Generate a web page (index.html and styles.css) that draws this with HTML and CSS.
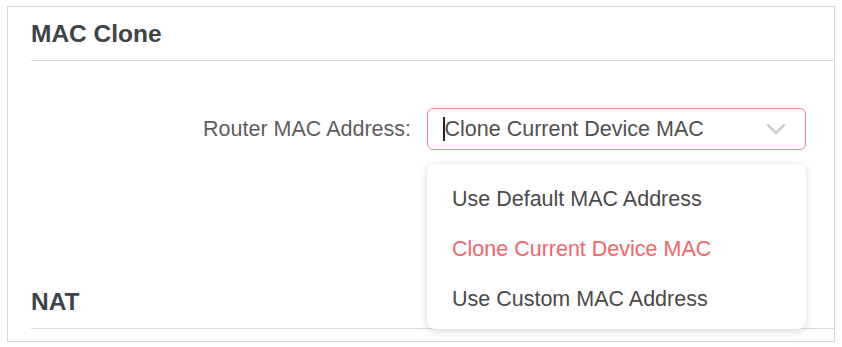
FILE: index.html
```html
<!DOCTYPE html>
<html lang="en">
<head>
  <meta charset="UTF-8" />
  <title>MAC Clone</title>
  <link rel="stylesheet" href="styles.css">
</head>
<body>
  <div class="panel">
    <!-- MAC Clone section -->
    <div class="section">
      <h2 class="section-title">MAC Clone</h2>
      <div class="form-row">
        <label class="form-label">Router MAC Address:</label>
        <div class="select-wrap">
          <div class="select-box">
            <span class="caret"></span>
            <span class="select-text">Clone Current Device MAC</span>
            <svg class="chevron" width="20" height="12" viewBox="0 0 20 12">
              <path d="M2 2 L10 10 L18 2" fill="none" stroke="#c8c8c8" stroke-width="2.2" stroke-linecap="round" stroke-linejoin="round"/>
            </svg>
          </div>
          <!-- Open dropdown list -->
          <ul class="select-menu">
            <li>Use Default MAC Address</li>
            <li class="selected">Clone Current Device MAC</li>
            <li>Use Custom MAC Address</li>
          </ul>
        </div>
      </div>
    </div>

    <!-- NAT section -->
    <div class="section section-nat">
      <h2 class="section-title">NAT</h2>
    </div>
  </div>
</body>
</html>
```

FILE: styles.css
```css
/* General Styles */
body {
  font-family: Arial, "Liberation Sans", sans-serif;
  margin: 0;
  padding: 0;
  background-color: #ffffff;
}

.panel {
  margin: 6px 0 0 7px;
  width: 826px;
  height: 334px;
  border: 1px solid #d6d6d6;
  overflow: visible;
}

.section {
  margin-left: 23px;
}

.section-title {
  margin: 0;
  padding: 13px 0 12px 0;
  font-size: 24.5px;
  line-height: 28px;
  font-weight: bold;
  color: #3c4449;
  border-bottom: 1px solid #dcdcdc;
}

/* Form row */
.form-row {
  display: flex;
  align-items: center;
  margin-top: 47px;
}

.form-label {
  width: 380px;
  text-align: right;
  font-size: 21.5px;
  color: #5e5e5e;
  padding-right: 16px;
}

.select-wrap {
  position: relative;
}

.select-box {
  display: flex;
  align-items: center;
  width: 377px;
  height: 40px;
  border: 1px solid #e8868c;
  border-radius: 6px;
}

.caret {
  width: 1.5px;
  height: 24px;
  background-color: #222;
  margin-left: 15px;
}

.select-text {
  flex: 1;
  font-size: 21.5px;
  color: #505050;
}

.chevron {
  margin-right: 19px;
}

/* Dropdown menu */
.select-menu {
  position: absolute;
  top: 56px;
  left: 0;
  width: 379px;
  margin: 0;
  padding: 10px 0 5px 0;
  list-style: none;
  background: #fff;
  border-radius: 8px;
  box-shadow: 0 2px 8px rgba(0, 0, 0, 0.16);
  z-index: 10;
}

.select-menu li {
  padding: 0 25px;
  height: 50px;
  line-height: 50px;
  font-size: 21.5px;
  color: #4a4a4a;
}

.select-menu li.selected {
  color: #f0666c;
}

.section-nat {
  margin-top: 125px;
}
```
